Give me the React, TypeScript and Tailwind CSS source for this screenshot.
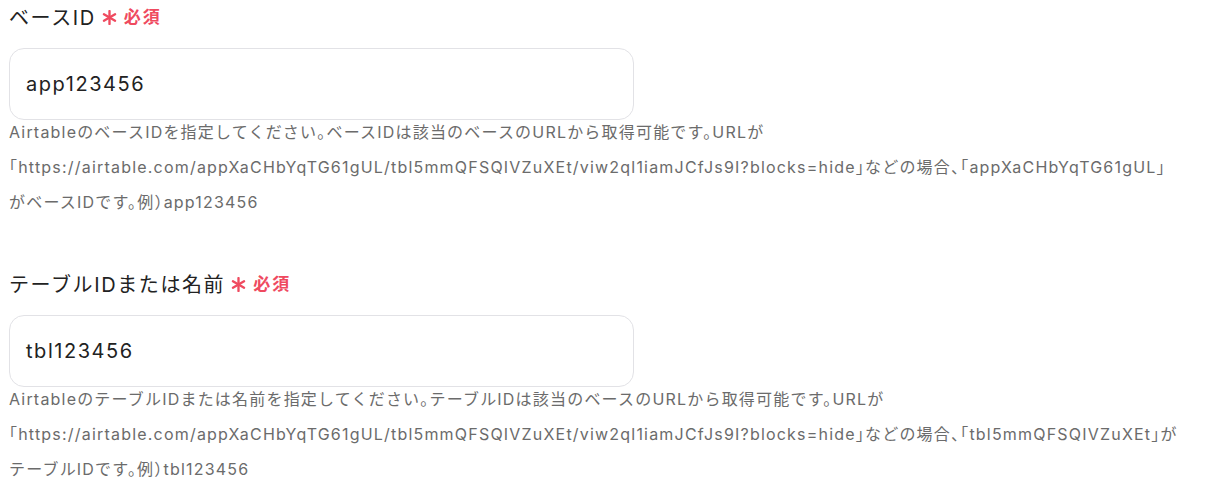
import { FC } from "react";

const font = {
  fontFamily: '"Inter", "Noto Sans CJK JP", sans-serif',
};

type FieldProps = {
  label: string;
  value: string;
  help: string;
};

const Asterisk: FC = () => (
  <svg width="15" height="15" viewBox="0 0 14 14" className="shrink-0">
    <g stroke="#ef4a5f" strokeWidth="2.2" strokeLinecap="round">
      <line x1="7" y1="1" x2="7" y2="13" />
      <line x1="1.8" y1="4" x2="12.2" y2="10" />
      <line x1="1.8" y1="10" x2="12.2" y2="4" />
    </g>
  </svg>
);

const Field: FC<FieldProps> = ({ label, value, help }) => (
  <div className="flex flex-col">
    <div className="flex items-center h-[35px]">
      <span className="text-[20px] tracking-[1.6px] text-[#222222]">{label}</span>
      <span className="ml-[6px]">
        <Asterisk />
      </span>
      <span className="ml-[7px] text-[17px] tracking-[2px] font-bold text-[#ef4a5f]">
        必須
      </span>
    </div>

    <div className="mt-[13px] w-[625px] h-[72px] rounded-[15px] border border-[#e2e2e6] bg-white flex items-center px-[16px]">
      <span className="text-[20px] tracking-[1.55px] text-[#222222]">{value}</span>
    </div>

    <p className="text-[16px] leading-[35px] tracking-[1.2px] text-[#6b6b6b] pr-[15px] mt-[-5px] whitespace-pre-line [font-feature-settings:'halt']">
      {help}
    </p>
  </div>
);

export default function App() {
  return (
    <div className="bg-white w-[1207px] min-h-[485px] pl-[9px]" style={font}>
      <Field
        label="ベースID"
        value="app123456"
        help={"AirtableのベースIDを指定してください。ベースIDは該当のベースのURLから取得可能です。URLが「https://airtable.com/appXaCHbYqTG61gUL/tbl5mmQFSQIVZuXEt/viw2ql1iamJCfJs9I?blocks=hide」などの場合、「appXaCHbYqTG61gUL」\nがベースIDです。例）app123456"}
      />
      <div className="h-[47px]" />
      <Field
        label="テーブルIDまたは名前"
        value="tbl123456"
        help="AirtableのテーブルIDまたは名前を指定してください。テーブルIDは該当のベースのURLから取得可能です。URLが「https://airtable.com/appXaCHbYqTG61gUL/tbl5mmQFSQIVZuXEt/viw2ql1iamJCfJs9I?blocks=hide」などの場合、「tbl5mmQFSQIVZuXEt」がテーブルIDです。例）tbl123456"
      />
    </div>
  );
}
